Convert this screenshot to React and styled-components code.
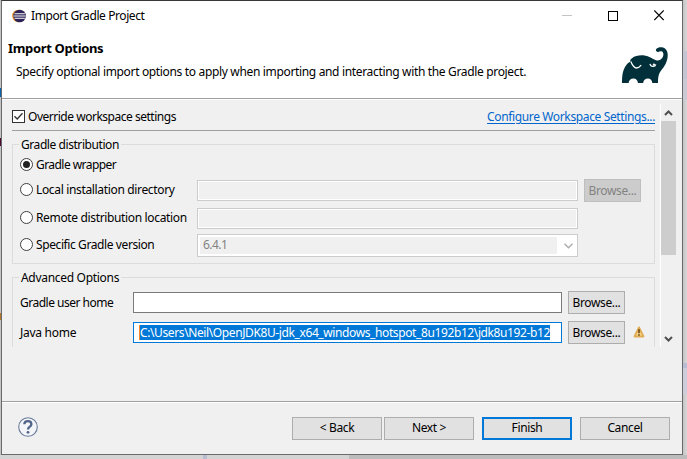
import React from 'react';
import styled, { createGlobalStyle, css } from 'styled-components';

const GlobalStyle = createGlobalStyle`
  * { box-sizing: border-box; }
  html, body, #root { margin: 0; height: 100%; }
  body {
    overflow: hidden;
    color: #000;
    font: 12px/16px "Noto Sans", "Open Sans", sans-serif;
  }
`;

const Desktop = styled.div`
  width: 687px;
  height: 459px;
  padding: 0 0 4px 1px;
  background:
    linear-gradient(#b9bdd4, #b9bdd4) 682px 363px / 5px 5px no-repeat,
    linear-gradient(#cccfdb, #cccfdb) 682px 368px / 5px 26px no-repeat,
    linear-gradient(#c3c5d3, #c3c5d3) 682px 51px / 5px 28px no-repeat,
    linear-gradient(#c9cad4, #c9cad4) 682px 79px / 5px 21px no-repeat,
    linear-gradient(#b9bdd0, #b9bdd0) 203px 455px / 4px 4px no-repeat,
    linear-gradient(90deg, #d4d4d4 349px, #bcbcbc 349px) 0 455px / 687px 4px no-repeat,
    linear-gradient(#0a64ad, #0a64ad) 0 88px / 1px 9px no-repeat,
    linear-gradient(#4b0a30, #4b0a30) 0 138px / 1px 8px no-repeat,
    linear-gradient(#b5772a, #b5772a) 0 313px / 1px 7px no-repeat,
    linear-gradient(90deg, #c4c4c4 683px, #d8d8d8 687px);
`;

const Dialog = styled.div`
  display: flex;
  flex-direction: column;
  width: 682px;
  height: 455px;
  border: 1px solid #6a6a6c;
  border-top-color: #3a3739;
  background: #f0f0f0;
`;

const TitleBar = styled.div`
  display: flex;
  align-items: center;
  height: 30px;
  padding-left: 10px;
  background: #fff;
  flex: none;
`;

const Title = styled.span`
  flex: 1;
  margin-left: 5px;
  white-space: pre;
  letter-spacing: -0.41px;
`;

const WindowButton = styled.span`
  display: flex;
  justify-content: center;
  width: 46px;
`;

const Header = styled.div`
  display: flex;
  justify-content: space-between;
  height: 68px;
  flex: none;
  padding: 9px 13px 0 6px;
  background: #fff;
  border-bottom: 1px solid #a0a0a0;
  box-shadow: 0 1px #fff;
`;

const Heading = styled.h1`
  margin: 0;
  font-size: 13px;
  line-height: 17px;
  letter-spacing: -0.34px;
`;

const Description = styled.p`
  margin: 7px 0 0 8px;
  white-space: nowrap;
  letter-spacing: -0.338px;
`;

const Logo = styled.svg`
  flex: none;
  margin-top: 6px;
`;

const ScrollArea = styled.div`
  display: flex;
  flex: none;
  height: 243px;
  margin-top: 5px;
  padding-left: 10px;
  overflow: hidden;
`;

const Content = styled.div`
  width: 643px;
  flex: none;
`;

const OverrideRow = styled.div`
  display: flex;
  align-items: center;
  height: 27px;
  border-bottom: 1px solid #a0a0a0;
`;

const Checkbox = styled.span`
  width: 13px;
  height: 13px;
  flex: none;
  display: flex;
  margin-top: -1px;
  border: 1px solid #333;
  background: #fff;
`;

const Label = styled.span`
  white-space: nowrap;
  letter-spacing: ${(p) => p.$track || 0}px;
`;

const OverrideLabel = styled(Label)`
  flex: 1;
  margin-left: 3px;
`;

const Link = styled.a`
  color: #0066cc;
  white-space: nowrap;
  letter-spacing: -0.365px;
  text-decoration: underline;
  text-underline-offset: 2px;
`;

const Group = styled.section`
  display: flex;
  flex-direction: column;
  align-items: stretch;
  height: ${(p) => p.$height}px;
  margin-top: 13px;
  padding: 0 12px 0 7px;
  border: 1px solid #dcdcdc;
`;

const Legend = styled.h2`
  align-self: flex-start;
  flex: none;
  margin: -8px 0 0 -1px;
  padding: 0 2px;
  height: 16px;
  font-size: 12px;
  font-weight: 400;
  background: #f0f0f0;
  letter-spacing: ${(p) => p.$track}px;
`;

const Row = styled.div`
  display: flex;
  align-items: center;
  flex: none;
  height: ${(p) => p.$height || 23}px;
  margin-top: ${(p) => p.$gap || 0}px;
`;

const RadioOption = styled.label`
  display: flex;
  align-items: center;
  gap: 3px;
  width: 177px;
  flex: none;
  margin-top: ${(p) => p.$lift || 0}px;
`;

const Radio = styled.span`
  display: flex;
  align-items: center;
  justify-content: center;
  flex: none;
  width: 13px;
  height: 13px;
  margin-top: -1px;
  border: 1px solid #404040;
  border-radius: 50%;
  background: #fff;
  &::after {
    content: '';
    width: 7px;
    height: 7px;
    border-radius: 50%;
    background: ${(p) => (p.$on ? '#222' : 'transparent')};
  }
`;

const DisabledField = styled.div`
  width: 381px;
  height: 21px;
  border: 1px solid #ccc;
  background: #f0f0f0;
  box-shadow: inset 0 0 0 1px #fff;
`;

const Combo = styled.div`
  display: flex;
  align-items: center;
  justify-content: space-between;
  width: 381px;
  height: 23px;
  padding: 2px 4px 2px 2px;
  border: 1px solid #ccc;
  background: #fff;
`;

const ComboValue = styled.span`
  width: 357px;
  height: 17px;
  padding-left: 3px;
  color: #838383;
  background: #f0f0f0;
  letter-spacing: -0.55px;
`;

const FieldLabel = styled(Label)`
  width: 113px;
  flex: none;
`;

const Field = styled.div`
  display: flex;
  align-items: center;
  flex: none;
  width: 429px;
  height: 21px;
  padding-left: 5px;
  border: 1px solid #7a7a7a;
  background: #fff;
  ${(p) => p.$focused && css`border-color: #0078d7;`}
`;

const Selection = styled.span`
  height: 15px;
  width: 411px;
  line-height: 15px;
  border-left: 1px solid #ff8728;
  white-space: nowrap;
  color: #fff;
  background: #0078d7;
  letter-spacing: -0.39px;
`;

const Button = styled.button`
  flex: none;
  width: ${(p) => p.$width || 57}px;
  height: 23px;
  margin: 0 0 0 ${(p) => p.$gap || 0}px;
  padding: 0;
  border: 1px solid #adadad;
  background: #e1e1e1;
  color: #000;
  font: inherit;
  line-height: 20px;
  letter-spacing: -0.36px;
  ${(p) => p.$primary && css`border: 2px solid #0078d7; line-height: 18px;`}
  &:disabled {
    border-color: #bfbfbf;
    background: #ccc;
    color: #838383;
  }
`;

const WarningIcon = styled.svg`
  margin-left: 8px;
  margin-top: -2px;
  flex: none;
`;

const ScrollBar = styled.div`
  display: flex;
  flex-direction: column;
  align-items: center;
  margin-left: 5px;
  padding-bottom: 3px;
  width: 16px;
  border-left: 1px solid #fff;
`;

const ScrollArrow = styled.svg`
  flex: none;
`;

const Thumb = styled.div`
  width: 15px;
  height: 134px;
  flex: none;
  margin: 0 0 auto;
  background: #cdcdcd;
`;

const Footer = styled.footer`
  display: flex;
  align-items: center;
  flex: 1;
  margin-top: 54px;
  padding: 0 12px 0 16px;
  border-top: 1px solid #a0a0a0;
  box-shadow: inset 0 1px #fff;
`;

const HelpIcon = styled.svg`
  margin: -2px auto 0 0;
`;

function EclipseIcon() {
  return (
    <svg width="14" height="14" viewBox="0 0 14 14">
      <circle cx="6.3" cy="7" r="6.2" fill="#f29a2e" />
      <circle cx="7.6" cy="7" r="6.3" fill="#2c2255" />
      <path d="M2.5 4.8H12.8M1.6 7H13.6M2.5 9.2H12.8" stroke="#fff" strokeWidth="1.1" />
    </svg>
  );
}

function Elephant() {
  return (
    <Logo width="48" height="38" viewBox="0 0 48 38">
      <path
        fill="#02303a"
        d="M1 37C1 30 1.6 24 5 19.5C6.5 17.3 8 16 9.3 15.7C9 14.5 9.5 13.2 11 12.3C14 9.8 18.5 9 23.5 9.5C28 10 31.2 13 35 14.2C37.3 15 40 13.9 41.4 11.8C43 9.2 42.8 6 40.3 5.3C39 5 38.2 5.6 37.2 5.9C35.3 6.2 34.1 4.2 35.4 2.8C37 1.2 39.6.8 42 1.6C45.5 2.8 47 6.4 46.7 10C46.3 16 43.7 20.3 40.3 24.2C37.7 27.2 37 31 37 37H31.3C31.2 34.5 29.5 32.6 26.9 32.6C24.2 32.6 22.4 34.4 22.2 37H17C16.8 34.5 15 32.6 12.4 32.6C9.7 32.6 7.8 34.5 7.6 37Z"
      />
      <path d="M9.8 15.6C11 18.5 12.7 21.6 15.2 22C17.5 22 19 20.8 20.2 19.2" fill="none" stroke="#fff" strokeWidth="1.3" />
      <path d="M29 17.9C29.6 21.2 34.2 21.2 34.8 18.4" fill="none" stroke="#fff" strokeWidth="1.2" />
      <circle cx="32.9" cy="18.7" r="1.1" fill="#fff" />
    </Logo>
  );
}

export default function App() {
  return (
    <>
      <GlobalStyle />
      <Desktop>
        <Dialog>
          <TitleBar>
            <EclipseIcon />
            <Title>Import Gradle Project</Title>
            <WindowButton>
              <svg width="10" height="10"><path d="M0 4.5H10" stroke="#c4c4c4" /></svg>
            </WindowButton>
            <WindowButton>
              <svg width="10" height="11"><rect x=".5" y=".5" width="9" height="9" fill="none" stroke="#000" /></svg>
            </WindowButton>
            <WindowButton>
              <svg width="10" height="12"><path d="M.3 .5L9.7 10M9.7 .5L.3 10" stroke="#000" strokeWidth="1.1" /></svg>
            </WindowButton>
          </TitleBar>
          <Header>
            <div>
              <Heading>Import Options</Heading>
              <Description>
                Specify optional import options to apply when importing and interacting with the Gradle project.
              </Description>
            </div>
            <Elephant />
          </Header>

          <ScrollArea>
            <Content>
              <OverrideRow>
                <Checkbox>
                  <svg width="11" height="11"><path d="M1.5 5.2L4.2 8L9.5 2.2" fill="none" stroke="#333" strokeWidth="1.3" /></svg>
                </Checkbox>
                <OverrideLabel $track={-0.48}>Override workspace settings</OverrideLabel>
                <Link>Configure Workspace Settings...</Link>
              </OverrideRow>

              <Group $height={120}>
                <Legend $track={-0.43}>Gradle distribution</Legend>
                <Row $height={24}>
                  <RadioOption><Radio $on /><Label $track={-0.55}>Gradle wrapper</Label></RadioOption>
                </Row>
                <Row $gap={2}>
                  <RadioOption $lift={-1}><Radio /><Label $track={-0.34}>Local installation directory</Label></RadioOption>
                  <DisabledField />
                  <Button disabled $gap={6}>Browse...</Button>
                </Row>
                <Row $gap={6} $height={21}>
                  <RadioOption $lift={-1}><Radio /><Label $track={-0.35}>Remote distribution location</Label></RadioOption>
                  <DisabledField />
                </Row>
                <Row $gap={5}>
                  <RadioOption $lift={-1}><Radio /><Label $track={-0.4}>Specific Gradle version</Label></RadioOption>
                  <Combo>
                    <ComboValue>6.4.1</ComboValue>
                    <svg width="9" height="6"><path d="M.5 .7L4.5 4.7L8.5 .7" fill="none" stroke="#ababab" strokeWidth="1.4" /></svg>
                  </Combo>
                </Row>
              </Group>

              <Group $height={100}>
                <Legend $track={-0.3}>Advanced Options</Legend>
                <Row $gap={5}>
                  <FieldLabel $track={-0.5}>Gradle user home</FieldLabel>
                  <Field />
                  <Button $gap={6}>Browse...</Button>
                </Row>
                <Row $gap={7}>
                  <FieldLabel $track={-0.27}>Java home</FieldLabel>
                  <Field $focused>
                    <Selection>C:\Users\Neil\OpenJDK8U-jdk_x64_windows_hotspot_8u192b12\jdk8u192-b12</Selection>
                  </Field>
                  <Button $gap={6}>Browse...</Button>
                  <WarningIcon width="12" height="12">
                    <path d="M6 1.5L10.4 10.4H1.6Z" fill="#f9d88a" stroke="#e0ad57" strokeWidth="2" strokeLinejoin="round" />
                    <path d="M6 3.3V7.2M6 8.2V9.7" stroke="#6b4512" strokeWidth="1.6" />
                  </WarningIcon>
                </Row>
              </Group>
            </Content>
            <ScrollBar>
              <ScrollArrow width="15" height="17"><path d="M4 11L7.5 7.5L11 11" fill="none" stroke="#505050" strokeWidth="2" /></ScrollArrow>
              <Thumb />
              <ScrollArrow width="15" height="13"><path d="M4 6L7.5 9.5L11 6" fill="none" stroke="#505050" strokeWidth="2" /></ScrollArrow>
            </ScrollBar>
          </ScrollArea>

          <Footer>
            <HelpIcon width="20" height="20">
              <circle cx="10" cy="10" r="9.3" fill="#f4f5f8" stroke="#68799a" strokeWidth="1.1" />
              <path d="M6.3 7.2C6.5 2.9 13.4 3.1 13.4 7.2C13.4 9.8 10 9.5 10 12.6" fill="none" stroke="#51658a" strokeWidth="2.3" />
              <circle cx="10" cy="15.3" r="1.4" fill="#51658a" />
            </HelpIcon>
            <Button $width={90}>&lt; Back</Button>
            <Button $width={90} $gap={2}>Next &gt;</Button>
            <Button $width={90} $gap={8} $primary>Finish</Button>
            <Button $width={90} $gap={8}>Cancel</Button>
          </Footer>
        </Dialog>
      </Desktop>
    </>
  );
}
